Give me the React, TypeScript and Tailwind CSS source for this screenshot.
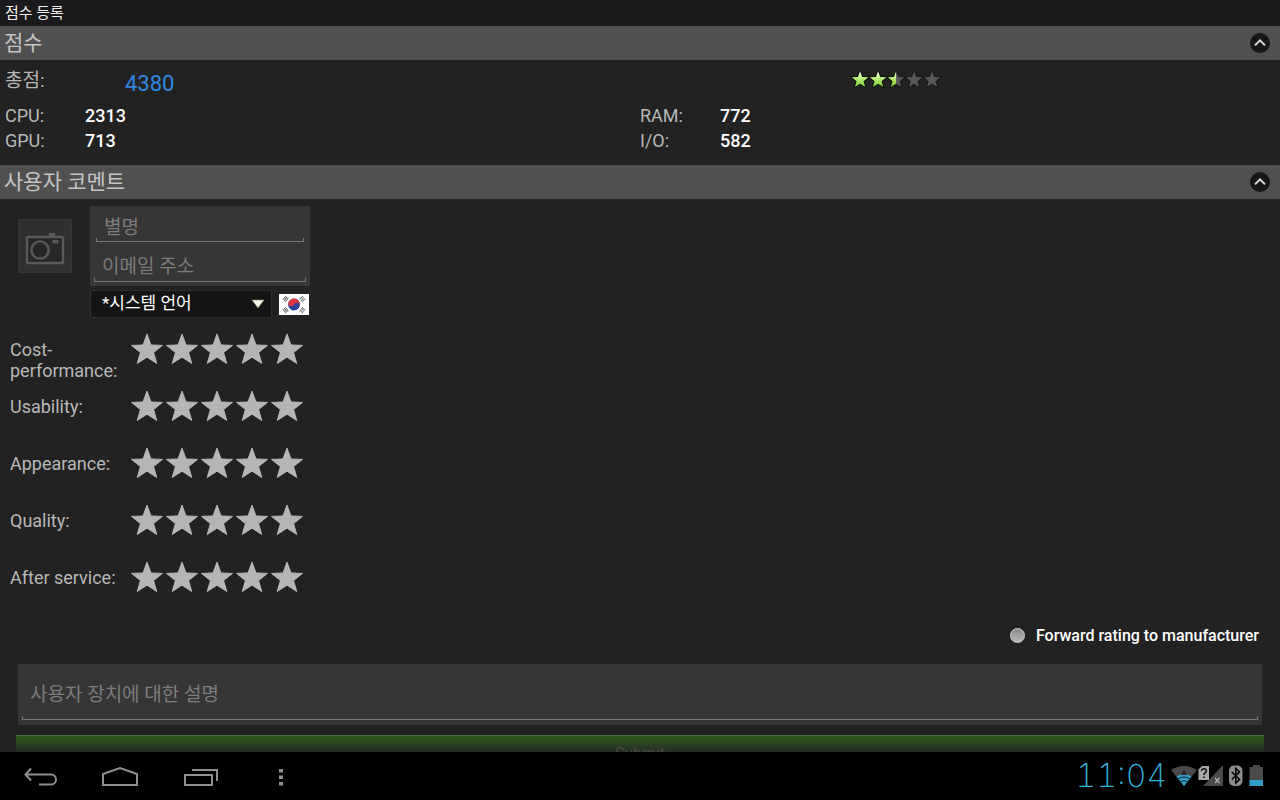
import { useState, type ReactNode } from 'react'

const STAR_PATH = 'M16 1 L20 11.9 L31.5 12.4 L22.6 19.6 L25.8 30.5 L16 24.2 L6.2 30.5 L9.4 19.6 L0.5 12.4 L12 11.9 Z'

export default function App() {
  return (
    <div className="flex h-screen flex-col overflow-hidden bg-[#222222] font-[Roboto,'Noto_Sans_CJK_KR',sans-serif] text-[#b8b8b8]">
      <h1 className="h-[26px] shrink-0 bg-[#1a1a1c] pl-[5px] text-[15px] leading-[26px] text-[#f0f0f0]">점수 등록</h1>

      <main className="min-h-0 flex-1 overflow-hidden">
        <Section title="점수">
          <div className="h-[105px] pt-1">
            <div className="grid h-[39px] grid-cols-3">
              <div className="col-span-2 flex pl-[5px]">
                <span className="w-[120px] text-[19px] leading-[34px]">총점:</span>
                <span className="text-[22px] leading-[39px] text-[#3088e0]">4380</span>
              </div>
              <ScoreStars value={2.5} />
            </div>
            <dl className="grid grid-cols-2 text-lg leading-[25px]">
              {scores.map((score) => (
                <div key={score.label} className="flex nth-[odd]:pl-[5px]">
                  <dt className="w-20">{score.label}:</dt>
                  <dd className="font-medium text-white">{score.value}</dd>
                </div>
              ))}
            </dl>
          </div>
        </Section>

        <Section title="사용자 코멘트">
          <form onSubmit={(e) => e.preventDefault()}>
            <div className="flex pt-[7px] pl-[18px]">
              <button type="button" aria-label="사진" className="mt-[13px] mr-[18px] size-[54px] border border-[#363636] bg-[#303030]">
                <CameraIcon />
              </button>
              <div className="w-[220px]">
                <div className="h-20 bg-[#363636] px-1">
                  <div className="px-0.5">
                    <input type="text" aria-label="별명" placeholder="별명" className="block h-8 w-full px-2 pt-2.5 text-[19px] outline-none placeholder:text-[#7c7c7c]" />
                    <Underline />
                  </div>
                  <input type="email" aria-label="이메일 주소" placeholder="이메일 주소" className="block h-9 w-full px-2 pt-3 text-[19px] outline-none placeholder:text-[#7c7c7c]" />
                  <Underline />
                </div>
                <div className="mt-1 flex items-center gap-[7px]">
                  <div className="relative w-[182px]">
                    <select aria-label="언어" className="h-7 w-full appearance-none rounded-xs border border-[#2e2e2e] bg-[#141414] pb-0.5 pl-[11px] text-[17px] text-white outline-none">
                      <option>*시스템 언어</option>
                      <option>한국어</option>
                      <option>English</option>
                    </select>
                    <svg className="pointer-events-none absolute top-[9px] right-[7px]" width="14" height="11" viewBox="0 0 14 11">
                      <path d="M1 1h12L7 9z" fill="#f4f4ea" stroke="#8a8a6a" strokeWidth="0.6" />
                    </svg>
                  </div>
                  <KoreanFlag />
                </div>
              </div>
            </div>

            <div className="pt-[11px] pl-2.5">
              {ratings.map((label) => (
                <RatingRow key={label} label={label} />
              ))}
            </div>

            <div className="flex h-[43px] items-center justify-end pr-[21px]">
              <label className="flex items-center gap-[11px] text-base font-medium text-white">
                <input
                  type="checkbox"
                  className="size-[15px] appearance-none rounded-full border border-[#cfcfcf] bg-linear-to-b from-[#8c8c8e] to-[#b8b8ba] checked:from-[#8fd64a] checked:to-[#4f9a1c]"
                />
                Forward rating to manufacturer
              </label>
            </div>

            <div className="mx-[18px] mt-[7px] h-[61px] bg-[#363636] px-1">
              <textarea
                aria-label="사용자 장치에 대한 설명"
                placeholder="사용자 장치에 대한 설명"
                className="block h-[52px] w-full resize-none px-2 pt-[17px] text-[19px] leading-7 outline-none placeholder:text-[#7c7c7c]"
              />
              <Underline />
            </div>

            <div className="mx-4 mt-2.5">
              <button
                type="submit"
                className="block h-9 w-full border-t border-[#4d6b43] bg-linear-to-b from-[#2f5a1a] to-[#222622] to-[18px] text-base text-[#434b40]"
              >
                Submit
              </button>
            </div>
          </form>
        </Section>
      </main>

      <SystemBar />
    </div>
  )
}

function Section({ title, children }: { title: string; children: ReactNode }) {
  const [open, setOpen] = useState(true)

  return (
    <section>
      <div className="flex h-[34px] items-center justify-between bg-[#505050] pr-2.5 pl-1">
        <h2 className="text-[21px] leading-[34px] text-[#c4c4c4]">{title}</h2>
        <button type="button" aria-label={title} aria-expanded={open} onClick={() => setOpen(!open)}>
          <svg className={open ? 'block' : 'block rotate-180'} width="20" height="20" viewBox="0 0 20 20">
            <circle cx="10" cy="10" r="10" fill="#171717" />
            <path d="M5 12.4 L10 7.4 L15 12.4" fill="none" stroke="#dcdcdc" strokeWidth="2" />
          </svg>
        </button>
      </div>
      {open && children}
    </section>
  )
}

function Underline() {
  return <div className="h-1 border-x border-b border-[#7a7777]" />
}

function ScoreStars({ value }: { value: number }) {
  return (
    <svg className="mt-1.5 -ml-0.5" width="90" height="20" viewBox="0 0 90 20" role="img" aria-label={`${value} / 5`}>
      <defs>
        <linearGradient id="score-green" x1="0" y1="0" x2="0" y2="1">
          <stop offset="0.1" stopColor="#f2ffe0" />
          <stop offset="0.5" stopColor="#b4ee6e" />
          <stop offset="1" stopColor="#7cc832" />
        </linearGradient>
        <clipPath id="half-star">
          <rect x="-2" y="-2" width="18" height="38" />
        </clipPath>
      </defs>
      {[0, 1, 2, 3, 4].map((i) => (
        <g key={i} transform={`translate(${i * 18 + 0.6} 0.8) scale(0.53)`}>
          <path d={STAR_PATH} fill="#585858" stroke="#141414" strokeWidth="3" strokeLinejoin="round" paintOrder="stroke" />
          {value > i && (
            <path
              d={STAR_PATH}
              fill="url(#score-green)"
              stroke="#0d1404"
              strokeWidth="3"
              strokeLinejoin="round"
              paintOrder="stroke"
              clipPath={value - i < 1 ? 'url(#half-star)' : undefined}
            />
          )}
        </g>
      ))}
    </svg>
  )
}

function RatingRow({ label }: { label: string }) {
  const [value, setValue] = useState(0)

  return (
    <div className="flex h-[57px]" role="group" aria-label={label}>
      <span className="w-[121px] pt-2.5 text-lg leading-[21px]">{label}:</span>
      <div className="flex gap-[3px] pt-1">
        {[1, 2, 3, 4, 5].map((n) => (
          <button key={n} type="button" aria-label={`${label} ${n}`} className="size-8" onClick={() => setValue(n)}>
            <svg className="block" width="32" height="32" viewBox="0 0 32 32">
              <path d={STAR_PATH} fill={n <= value ? '#9bdc50' : '#b5b5b5'} stroke={n <= value ? '#9bdc50' : '#c4c4c4'} strokeWidth="0.8" strokeLinejoin="round" />
            </svg>
          </button>
        ))}
      </div>
    </div>
  )
}

function CameraIcon() {
  return (
    <svg className="block" width="52" height="52" viewBox="0 0 52 52" fill="none" stroke="#5a5a5a">
      <rect x="8" y="17" width="36" height="26" rx="1.5" fill="#272727" strokeWidth="2.4" />
      <circle cx="21" cy="30" r="8.6" strokeWidth="2.4" />
      <path d="M30 13h6v4h-6zM33.5 20h6v3.5h-6z" fill="#5a5a5a" stroke="none" />
    </svg>
  )
}

function KoreanFlag() {
  return (
    <svg width="30" height="21" viewBox="0 0 30 21" role="img" aria-label="대한민국">
      <path d="M0 0h30v21H0z" fill="#ffffff" />
      <g transform="rotate(24 15 10.5)">
        <circle cx="15" cy="10.5" r="5.9" fill="#26409c" />
        <path d="M9.1 10.5a5.9 5.9 0 0 1 11.8 0a2.95 2.95 0 0 0 -5.9 0a2.95 2.95 0 0 1 -5.9 0z" fill="#dd3440" />
      </g>
      <g stroke="#4a4a4a" strokeWidth="1">
        <path d="M4 5.8L7 2M5.2 6.8L8.2 3M6.4 7.6L9.4 3.8" />
        <path d="M26 5.8L23 2M24.8 6.8L21.8 3M23.6 7.6L20.6 3.8" strokeDasharray="2.1 0.6" />
        <path d="M4 15.2L7 19M5.2 14.2L8.2 18M6.4 13.4L9.4 17.2" />
        <path d="M26 15.2L23 19M24.8 14.2L21.8 18M23.6 13.4L20.6 17.2" strokeDasharray="2.1 0.6" />
      </g>
    </svg>
  )
}

function SystemBar() {
  return (
    <footer className="flex h-12 shrink-0 items-center justify-between bg-black pr-4 pl-px">
      <nav className="flex pt-0.5">
        <button type="button" aria-label="Back" className="grid h-12 w-20 place-items-center">
          <svg width="34" height="20" viewBox="0 0 34 20" fill="none" stroke="#8f8f8f" strokeWidth="2">
            <path d="M7 1.5L1.5 7.5L7 13.5M1.5 7.5H27a5 5 0 0 1 0 10H15" />
          </svg>
        </button>
        <button type="button" aria-label="Home" className="grid h-12 w-20 place-items-center">
          <svg width="38" height="20" viewBox="0 0 38 20" fill="none" stroke="#8f8f8f" strokeWidth="2">
            <path d="M1 18V7L18 1L35 7V18Z" />
          </svg>
        </button>
        <button type="button" aria-label="Recent apps" className="grid h-12 w-20 place-items-center">
          <svg width="36" height="20" viewBox="0 0 36 20" fill="none" stroke="#8f8f8f" strokeWidth="2">
            <path d="M2 8H29V18H2ZM9 3H34V14" />
          </svg>
        </button>
        <button type="button" aria-label="Menu" className="grid h-12 w-20 place-items-center">
          <svg width="4" height="18" viewBox="0 0 4 18" fill="#8f8f8f">
            <path d="M0 1h4v3.500H0zM0 7.500h4v3.500H0zM0 14h4v3.500H0z" />
          </svg>
        </button>
      </nav>

      <div className="flex items-center">
        <time className="mr-1 font-[Inter,sans-serif] text-[32px] leading-[48px] font-extralight tabular-nums text-[#33b0dc]">11:04</time>
        <StatusIcons />
      </div>
    </footer>
  )
}

function StatusIcons() {
  return (
    <svg width="93" height="24" viewBox="0 0 93 24" role="img" aria-label="Wi-Fi, no signal, Bluetooth, battery">
      {/* wifi */}
      <path d="M0 6Q13 -2 26 6L13 22Z" fill="#4a4a4a" />
      <path d="M5.500 12.500Q13 7.500 20.500 12.500L13 22Z" fill="#2f9fc8" />
      <path d="M7 15Q13 11 19 15M9.500 18Q13 15.500 16.500 18" fill="none" stroke="#0d2c38" strokeWidth="1" />
      <path d="M13 5L16 11H10Z" fill="#262626" />
      {/* signal with sim */}
      <path d="M52 1V22H32Z" fill="#4a4a4a" />
      <path d="M31 2H38V16H27.500V5.500Z" fill="#a8a8a8" />
      <path d="M30.500 7Q30.800 4.800 33 4.800Q35.300 4.800 35.300 7Q35.300 8.300 34 9Q32.900 9.700 32.900 11M32.900 12.500V14" fill="none" stroke="#111" strokeWidth="1.600" />
      <path d="M44 14L48.500 19M48.500 14L44 19" stroke="#b4b4b4" strokeWidth="1.200" />
      {/* bluetooth */}
      <rect x="58" y="1.500" width="13.500" height="20.500" rx="5" fill="#8c8c8c" />
      <path d="M60.800 8L68.500 15.500L64.800 19V4.500L68.500 8L60.800 15.500" fill="none" stroke="#000" strokeWidth="1.500" />
      {/* battery */}
      <path d="M82 1H89V3H92V22H78.500V3H82Z" fill="#4a4a4a" />
      <path d="M78.500 16H92V22H78.500Z" fill="#2f9fc8" />
    </svg>
  )
}

const scores = [
  { label: 'CPU', value: 2313 },
  { label: 'RAM', value: 772 },
  { label: 'GPU', value: 713 },
  { label: 'I/O', value: 582 },
]

const ratings = ['Cost-performance', 'Usability', 'Appearance', 'Quality', 'After service']
